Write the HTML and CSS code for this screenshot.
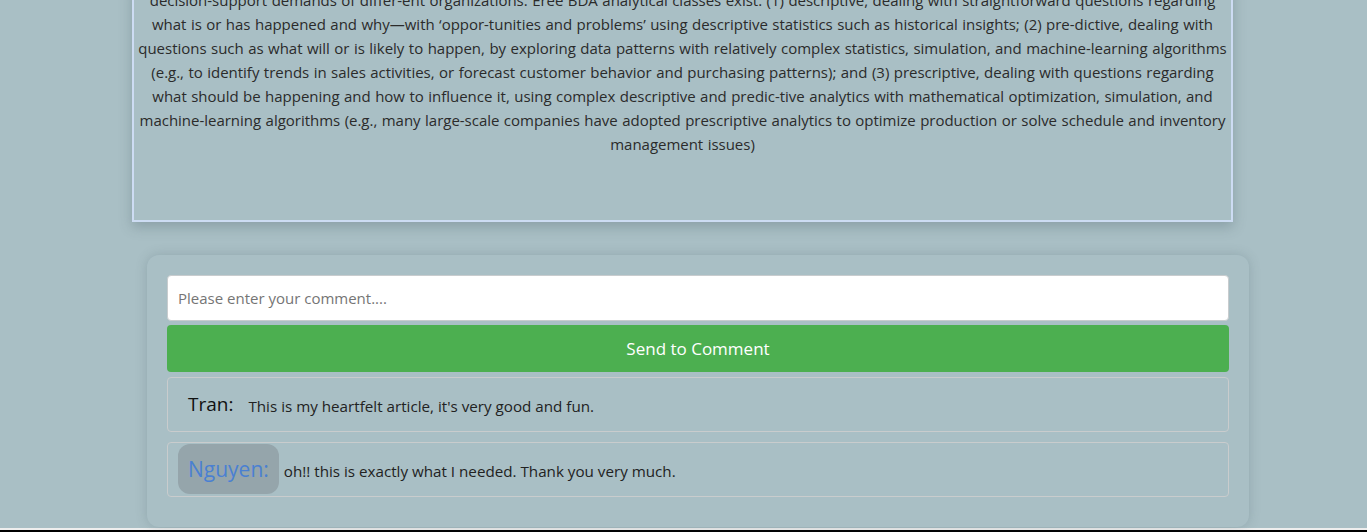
FILE: index.html
```html
<!DOCTYPE html>
<html lang="en">
<head>
<meta charset="utf-8">
<title>Article</title>
<link rel="stylesheet" href="styles.css">
</head>
<body>
<main class="page">
  <article class="article">
    <p class="article-text">decision-support demands of differ-ent organizations. Eree BDA analytical classes exist: (1) descriptive, dealing with straightforward questions regarding<br>what is or has happened and why—with ‘oppor-tunities and problems’ using descriptive statistics such as historical insights; (2) pre-dictive, dealing with<br>questions such as what will or is likely to happen, by exploring data patterns with relatively complex statistics, simulation, and machine-learning algorithms<br>(e.g., to identify trends in sales activities, or forecast customer behavior and purchasing patterns); and (3) prescriptive, dealing with questions regarding<br>what should be happening and how to influence it, using complex descriptive and predic-tive analytics with mathematical optimization, simulation, and<br>machine-learning algorithms (e.g., many large-scale companies have adopted prescriptive analytics to optimize production or solve schedule and inventory<br>management issues)</p>
  </article>

  <section class="comments">
    <input class="comment-input" type="text" placeholder="Please enter your comment....">
    <button class="comment-send" type="button">Send to Comment</button>
    <div class="comment">
      <span class="comment-name">Tran:</span>
      <span class="comment-text">This is my heartfelt article, it's very good and fun.</span>
    </div>
    <div class="comment">
      <span class="comment-name comment-name--active">Nguyen:</span>
      <span class="comment-text">oh!! this is exactly what I needed. Thank you very much.</span>
    </div>
  </section>
</main>
<footer class="footer"></footer>
</body>
</html>
```

FILE: styles.css
```css
* {
  box-sizing: border-box;
}

html, body {
  margin: 0;
  padding: 0;
}

body {
  background: #a9bfc5;
  font-family: "Open Sans", "Noto Sans", sans-serif;
  color: #2a2a2a;
  overflow: hidden;
}

.page {
  display: flex;
  flex-direction: column;
  align-items: flex-start;
}

.article {
  margin: -14px 0 0 132px;
  width: 1101px;
  border: 2px solid #cddcf3;
  padding: 0 0 64px;
  box-shadow: 0 5px 12px rgba(60, 80, 90, 0.28);
}

.article-text {
  margin: 0;
  text-align: center;
  font-size: 15px;
  line-height: 24px;
  letter-spacing: -0.02px;
  word-spacing: 0.6px;
  color: #2b2b2b;
}

.comments {
  margin: 33px 0 0 147px;
  width: 1102px;
  padding: 20px 20px 30px;
  border-radius: 12px;
  background: #a9bfc5;
  box-shadow: 0 0 12px rgba(60, 80, 90, 0.22);
  display: flex;
  flex-direction: column;
}

.comment-input {
  height: 46px;
  width: 100%;
  border: 1px solid #c8ccce;
  border-radius: 4px;
  background: #fff;
  padding: 0 10px;
  font-family: inherit;
  font-size: 15px;
  color: #333;
  outline: none;
}

.comment-input::placeholder {
  color: #757575;
}

.comment-send {
  margin-top: 4px;
  height: 47px;
  width: 100%;
  border: none;
  border-radius: 4px;
  background: #4caf50;
  color: #fff;
  font-family: inherit;
  font-size: 17px;
  cursor: pointer;
}

.comment {
  margin-top: 5px;
  height: 55px;
  border: 1px solid #c9cccd;
  border-radius: 4px;
  padding: 0 10px;
  display: flex;
  align-items: center;
}

.comment + .comment {
  margin-top: 10px;
}

.comment-name {
  font-size: 19px;
  color: #111;
  padding: 0 10px;
  height: 50px;
  display: flex;
  align-items: center;
  border-radius: 12px;
  margin: 0 5px 2px 0;
}

.comment-name--active {
  font-size: 21px;
  background: #95a5ab;
  color: #4a80d2;
}

.comment-text {
  font-size: 15.2px;
  color: #222;
  margin-top: 3px;
}

.footer {
  margin-top: 1px;
  height: 7px;
  background: #000;
  border-top: 2px solid #eeeeee;
}
```
